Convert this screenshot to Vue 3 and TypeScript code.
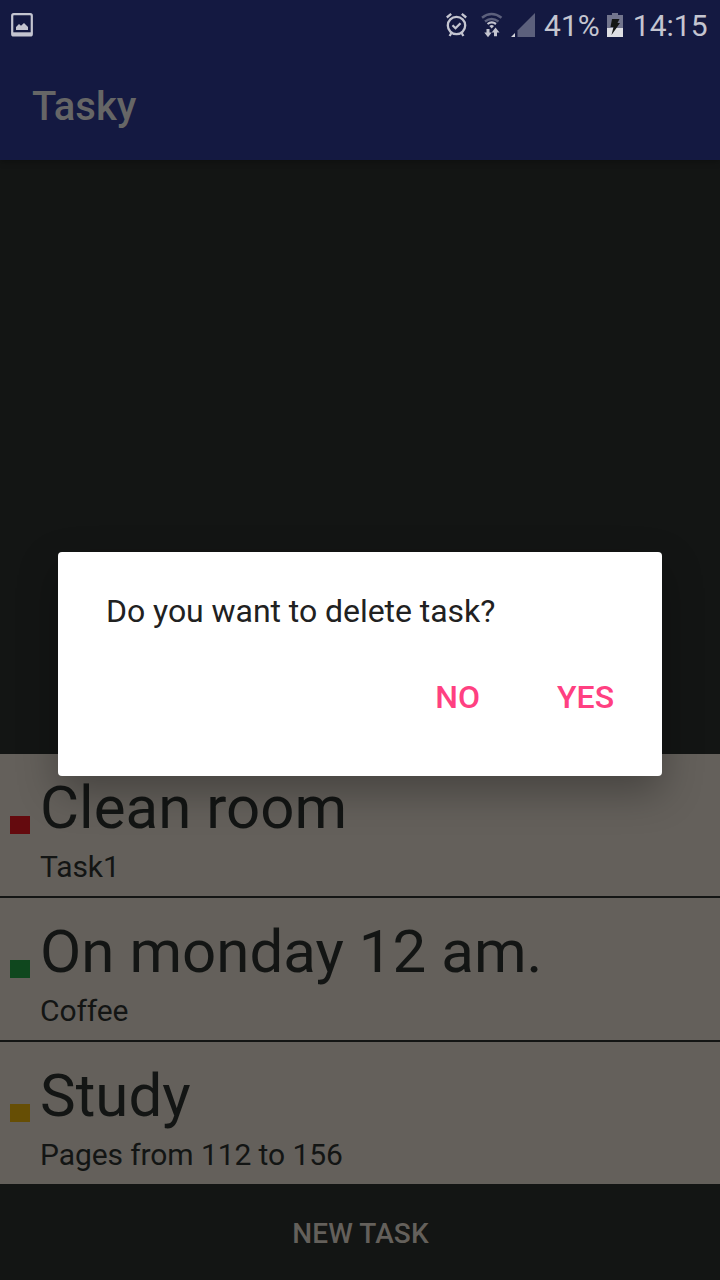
<script setup lang="ts">
interface Task {
  title: string
  note: string
  tone: 'red' | 'green' | 'amber'
}

const tasks: Task[] = [
  { title: 'Clean room', note: 'Task1', tone: 'red' },
  { title: 'On monday 12 am.', note: 'Coffee', tone: 'green' },
  { title: 'Study', note: 'Pages from 112 to 156', tone: 'amber' },
]
</script>

<template>
  <div class="screen">
    <header class="top">
      <div class="status">
        <svg class="picture" width="22" height="24" viewBox="0 0 22 24">
          <rect x="1.2" y="1.2" width="19.6" height="21.2" rx="1.5" fill="none" stroke="#c4c5d0" stroke-width="2.2" />
          <path d="M1 19.300h20v3.500H1z" fill="#c4c5d0" />
          <path d="M5 17v-3l3-3 2 1.700L13 10l4 4v3z" fill="#c4c5d0" />
        </svg>
        <div class="indicators">
          <svg class="alarm" width="22" height="26" viewBox="0 0 22 26">
            <g fill="none" stroke="#c4c5d0" stroke-width="2.3">
              <circle cx="10.5" cy="13.5" r="8.7" />
              <path d="M6.500 13.200l3 3 5-5" />
              <path d="M.8 5.500l4.400-3.700M20.200 5.500L15.800 1.800M5.400 21l-1.800 3M15.600 21l1.800 3" />
            </g>
          </svg>
          <svg class="wifi" width="22" height="26" viewBox="0 0 22 26">
            <g fill="none" stroke="#5c607c" stroke-width="2.5">
              <path d="M1 5.700q9.500-7.400 19.500 0" />
              <path d="M4 9.500q6.500-5 13.500 0" />
            </g>
            <path d="M6.500 12q4.200-3.200 8.500 0" fill="none" stroke="#c4c5d0" stroke-width="2.2" />
            <path d="M8.400 14q2.300-1.800 4.600 0l-2.300 2.400z" fill="#c4c5d0" />
            <path d="M5.500 17h3v3.500h2.200L7 25.200 3.300 20.500h2.200zM13 24.200h3v-3.700h2.500L14.500 15.500 10.700 20.500H13z" fill="#c4c5d0" />
          </svg>
          <svg class="signal" width="25" height="26" viewBox="0 0 25 26">
            <path d="M24 1v24H6.500V18.500z" fill="#5c607c" />
            <path d="M0 25l4-4v4z" fill="#d4d5dc" />
          </svg>
          <span class="percent">41%</span>
          <svg class="battery" width="16" height="24" viewBox="0 0 16 24">
            <path d="M0 2h5V0h6v2h5v13H0z" fill="#72758d" />
            <path d="M0 15h16v9H0z" fill="#dedfe4" />
            <path d="M5 6h7.500L10.500 10H13L4.500 22l2-8H3.500z" fill="#141614" />
          </svg>
          <span class="clock">14:15</span>
        </div>
      </div>
      <h1 class="title">Tasky</h1>
    </header>

    <main class="content">
      <ul class="tasks">
        <li v-for="task in tasks" :key="task.title" class="task">
          <span class="marker" :class="task.tone"></span>
          <div class="words">
            <div class="name">{{ task.title }}</div>
            <div class="note">{{ task.note }}</div>
          </div>
        </li>
      </ul>
    </main>

    <button class="new-task" type="button">NEW TASK</button>

    <div class="overlay">
      <section class="dialog" role="dialog">
        <p class="message">Do you want to delete task?</p>
        <div class="actions">
          <button class="action" type="button">NO</button>
          <button class="action" type="button">YES</button>
        </div>
      </section>
    </div>
  </div>
</template>

<style>
body {
  margin: 0;
  background: #131514;
}
</style>

<style scoped>
.screen {
  position: relative;
  display: flex;
  flex-direction: column;
  width: 720px;
  height: 1280px;
  overflow: hidden;
  background: #131514;
  color: #131514;
  font-family: Roboto, "Noto Sans", sans-serif;
}

button {
  border: 0;
  padding: 0;
  background: none;
  font-family: inherit;
}

.top {
  height: 160px;
  background: #141941;
  box-shadow: 0 2px 6px rgba(0, 0, 0, 0.25);
}

.status {
  display: flex;
  align-items: center;
  justify-content: space-between;
  height: 50px;
  padding: 0 12.5px 0 11px;
  color: #c4c5d0;
  font-size: 30px;
}

.indicators {
  display: flex;
  align-items: center;
}

.wifi {
  margin-left: 13px;
}

.signal {
  margin-left: 7.5px;
}

.percent {
  margin-left: 8.5px;
}

.percent,
.clock {
  padding-top: 2px;
  line-height: 50px;
}

.battery {
  margin-left: 7px;
}

.clock {
  margin-left: 10px;
}

.title {
  margin: 0;
  padding: 2px 32px 0;
  color: #666;
  font-size: 40px;
  font-weight: 500;
  line-height: 110px;
}

.content {
  flex: 1;
  display: flex;
  flex-direction: column;
  justify-content: flex-end;
}

.tasks {
  margin: 0;
  padding: 0;
  list-style: none;
}

.task {
  display: flex;
  align-items: center;
  gap: 10px;
  height: 142px;
  padding-left: 10px;
  background: #64605b;
}

.task + .task {
  border-top: 2px solid #131514;
}

.marker {
  width: 20px;
  height: 18px;
}

.red {
  background: #640a0e;
}

.green {
  background: #0f471e;
}

.amber {
  background: #664e05;
}

.words {
  height: 124px;
}

.name {
  padding-top: 10px;
  font-size: 60px;
  letter-spacing: 0.03px;
  line-height: 70px;
}

.note {
  font-size: 30px;
  letter-spacing: -0.09px;
  line-height: 48px;
}

.new-task {
  height: 96px;
  padding: 2px 0 0 1px;
  color: #64605b;
  font-size: 28px;
  font-weight: 500;
  letter-spacing: 0.1px;
}

.overlay {
  position: absolute;
  inset: 0;
  display: flex;
  justify-content: center;
  align-items: flex-start;
  padding-top: 552px;
}

.dialog {
  box-sizing: border-box;
  width: 604px;
  height: 224px;
  padding: 39px 48px 0;
  border-radius: 4px;
  background: #fff;
  box-shadow: 0 16px 40px rgba(0, 0, 0, 0.3);
}

.message {
  margin: 0;
  color: #212121;
  font-size: 32px;
  letter-spacing: -0.05px;
  line-height: 40px;
}

.actions {
  display: flex;
  justify-content: flex-end;
  gap: 77px;
  padding-top: 46px;
}

.action {
  color: #ff4081;
  font-size: 32px;
  font-weight: 500;
  line-height: 40px;
}
</style>
